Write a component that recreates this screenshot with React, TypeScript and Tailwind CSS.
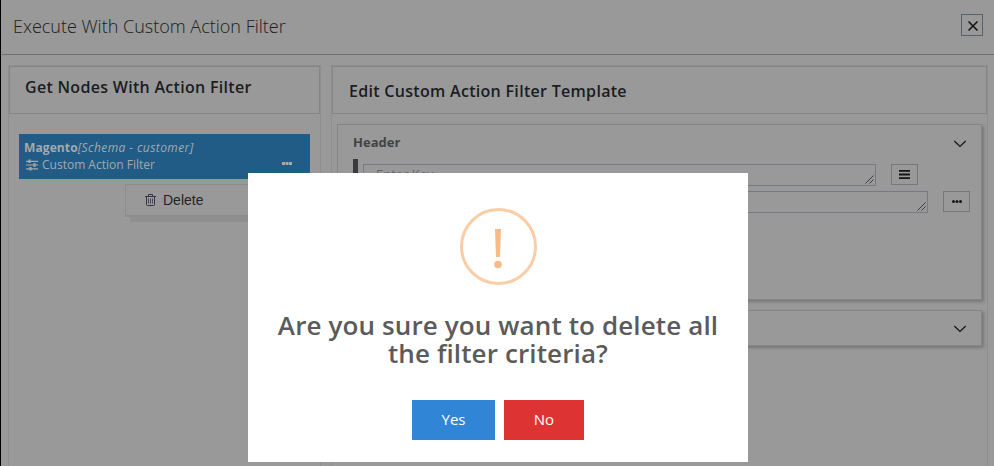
import type { ReactNode } from "react";

function Chevron() {
  return (
    <svg className="mt-0.5" width="14" height="8" viewBox="0 0 14 8" fill="none" stroke="#161616" strokeWidth="1.3">
      <path d="M1.3 1 7 6.4 12.7 1" />
    </svg>
  );
}

function TextArea({ className, children }: { className: string; children?: ReactNode }) {
  return (
    <div className={`relative h-[22px] overflow-hidden border border-[#777985] pl-3 text-[13px] leading-[18px] text-[#656565] ${className}`}>
      {children}
      <svg className="absolute right-px bottom-px" width="9" height="9" viewBox="0 0 9 9" stroke="#3d3d3d" strokeWidth="1">
        <path d="M0.5 8.5 8.5 0.5M4.5 8.5 8.5 4.5" />
      </svg>
    </div>
  );
}

function Panel({ title, className, titleClass, children }: { title: string; className: string; titleClass: string; children: ReactNode }) {
  return (
    <section className={`border border-b-0 border-[#8d8e90] ${className}`}>
      <h2 className={`h-12 border border-[#858585] text-[16px] font-semibold leading-6 tracking-[0.3px] text-[#1a1d21] ${titleClass}`}>
        <span>{title}</span>
      </h2>
      {children}
    </section>
  );
}

function Sliders() {
  return (
    <svg width="12" height="12" viewBox="0 0 12 12" fill="none" stroke="#a5a9ad" strokeWidth="1.2">
      <path d="M0 2.3h12M0 6h12M0 9.8h12" />
      <path d="M3.5 0.6v3.4M8.5 4.3v3.4M4.5 8.1v3.4" strokeWidth="2.2" />
    </svg>
  );
}

function Trash() {
  return (
    <svg width="11" height="12" viewBox="0 0 11 12" fill="none" stroke="#35334b" strokeWidth="1">
      <path d="M0 2.5h11M3.5 2.5v-2h4v2M1.5 2.5v8q0 1 1 1h6q1 0 1-1v-8" />
      <path d="M3.5 4.5v5M5.5 4.5v5M7.5 4.5v5" strokeWidth="0.8" />
    </svg>
  );
}

function Confirm() {
  return (
    <div role="dialog" className="absolute top-[173px] left-[247px] flex h-[289px] w-[500px] flex-col items-center bg-white pt-[35px]">
      <svg width="77" height="77" viewBox="0 0 77 77">
        <circle cx="38.5" cy="38.5" r="37" fill="none" stroke="#fbcda7" strokeWidth="3" />
        <path d="M35 21h6l-1 28h-4z" fill="#f8bb86" />
        <circle cx="38" cy="56.5" r="3.8" fill="#f8bb86" />
      </svg>
      <h3 className="mt-[26px] w-[470px] text-center text-[26px] font-semibold leading-7 tracking-[0.12px] text-[#5b5b5b]">
        Are you sure you want to delete all the filter criteria?
      </h3>
      <div className="mt-[33px] flex gap-[9px] text-[15px] font-medium text-white">
        <button className="h-10 w-[83px] bg-[#3085d6] pb-0.5">Yes</button>
        <button className="h-10 w-20 bg-[#dd3333] pb-0.5">No</button>
      </div>
    </div>
  );
}

export default function App() {
  return (
    <div className="relative h-[466px] w-[994px] overflow-hidden border-l border-black bg-[#999999] font-['Open_Sans',sans-serif]">
      <header className="flex h-[55px] items-start justify-between border-b border-[#707070] pr-[11px] pl-3">
        <h1 className="mt-3 text-[18px] font-light leading-7 text-[#202020]">Execute With Custom Action Filter</h1>
        <button className="mt-[14px] flex h-[22px] w-[22px] items-center justify-center border border-[#58616b]">
          <svg className="mt-px ml-px" width="10" height="10" viewBox="0 0 10 10" stroke="#111" strokeWidth="1.5">
            <path d="M0.5 0.5 9.5 9.5M9.5 0.5 0.5 9.5" />
          </svg>
        </button>
      </header>
      <main className="flex gap-[10px] pt-[10px] pl-[7px]">
        <Panel title="Get Nodes With Action Filter" className="h-[401px] w-[313px]" titleClass="pt-[8px] pl-[15px]">
          <div className="mt-5 ml-[10px] flex h-[45px] w-[291px] justify-between bg-[#205c85] pt-[5px] pr-[18px] pl-[5px] text-[12px] leading-[17px] text-[#a5a9ad]">
            <div>
              <div><b className="tracking-[0.1px]">Magento</b><i className="tracking-[0.42px]">[Schema - customer]</i></div>
              <div className="flex items-center gap-[4px] pl-0.5"><Sliders />Custom Action Filter</div>
            </div>
            <svg className="mt-[23px]" width="10" height="3" fill="#a5a9ad">
              <path d="M0 0h3v3H0zM3.5 0h3v3h-3zM7 0h3v3H7z" />
            </svg>
          </div>
          <div className="mt-[5px] ml-[116px] flex h-[33px] w-[180px] items-center gap-[7px] border border-b-2 border-[#8d8d8d] bg-[#999999] pl-[19px] font-['Liberation_Sans',sans-serif] text-[14px] text-[#222528] shadow-[5px_5px_0_#8f8f8f]">
            <Trash />Delete
          </div>
        </Panel>
        <Panel title="Edit Custom Action Filter Template" className="h-[401px] w-[657px]" titleClass="pt-[12px] pl-4">
          <div className="mt-[10px] ml-[5px] h-[176px] w-[645px] border border-[#858585] pl-[15px] shadow-[2px_2px_3px_#777777]">
            <div className="flex h-[34px] items-center justify-between pt-px pr-[14px] text-[13px] font-bold text-[#434343]">
              Header<Chevron />
            </div>
            <div className="flex h-[100px] border-l-[5px] border-[#3b3b3b] pt-[5px] pl-[5px]">
              <div className="flex flex-col gap-[5px]">
                <div className="flex gap-[15px]">
                  <TextArea className="w-[513px]">Enter Key</TextArea>
                  <button className="flex h-[21px] w-[27px] items-center justify-center border border-[#777777]">
                    <svg width="11" height="9" fill="#161616"><path d="M0 0h11v1.8H0zM0 3.6h11v1.8H0zM0 7.2h11V9H0z" /></svg>
                  </button>
                </div>
                <div className="flex gap-[15px]">
                  <TextArea className="w-[565px]" />
                  <button className="flex h-[21px] w-[27px] items-center justify-center border border-[#777777]">
                    <svg width="10" height="3" fill="#161616"><circle cx="1.5" cy="1.5" r="1.5" /><circle cx="5" cy="1.5" r="1.5" /><circle cx="8.5" cy="1.5" r="1.5" /></svg>
                  </button>
                </div>
              </div>
            </div>
          </div>
          <div className="mt-[10px] ml-[5px] flex h-9 w-[645px] items-center justify-end border border-[#858585] pr-[14px] shadow-[2px_2px_3px_#777777]">
            <Chevron />
          </div>
        </Panel>
      </main>
      <Confirm />
    </div>
  );
}
